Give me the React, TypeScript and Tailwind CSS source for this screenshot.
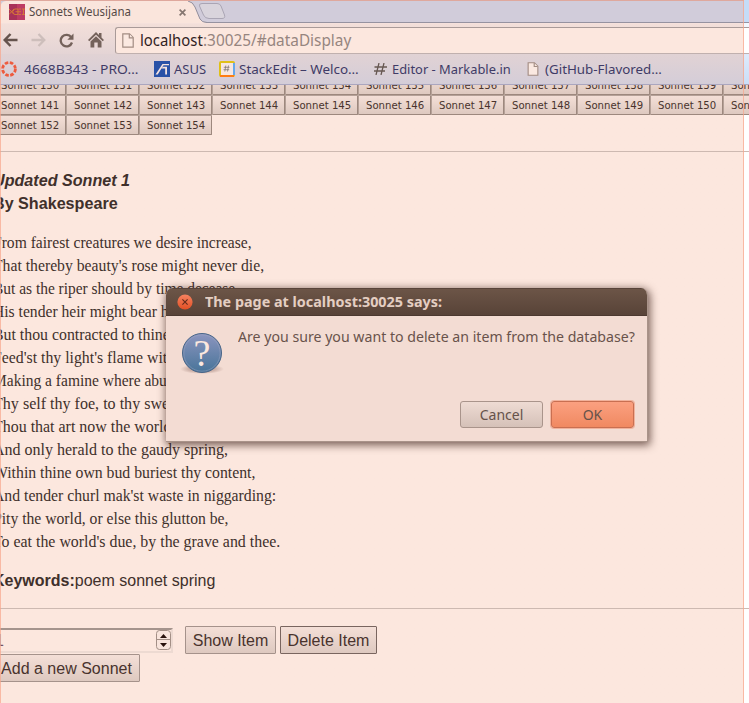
import React from "react";

const ubuntu = "font-['Noto_Sans','Open_Sans',sans-serif]";
const arial = "font-['Liberation_Sans',Arial,sans-serif]";

/* Each verse with its set width in pixels. */
const lines: [string, number][] = [
  ["From fairest creatures we desire increase,", 259],
  ["That thereby beauty's rose might never die,", 271],
  ["But as the riper should by time decease,", 246],
  ["His tender heir might bear his memory:", 246],
  ["But thou contracted to thine own bright eyes,", 286],
  ["Feed'st thy light's flame with self-substantial fuel,", 314],
  ["Making a famine where abundance lies,", 247],
  ["Thy self thy foe, to thy sweet self too cruel:", 280],
  ["Thou that art now the world's fresh ornament,", 292],
  ["And only herald to the gaudy spring,", 235],
  ["Within thine own bud buriest thy content,", 262],
  ["And tender churl mak'st waste in niggarding:", 283],
  ["Pity the world, or else this glutton be,", 235],
  ["To eat the world's due, by the grave and thee.", 287],
];

const rows = [
  Array.from({ length: 11 }, (_, i) => 130 + i),
  Array.from({ length: 11 }, (_, i) => 141 + i),
  [152, 153, 154],
];

/* A single line of text squeezed or stretched to a known width. */
function Fit({ w, className = "", children }: { w: number; className?: string; children: React.ReactNode }) {
  const ref = React.useRef<HTMLSpanElement>(null);
  const [s, setS] = React.useState(1);
  React.useLayoutEffect(() => {
    if (ref.current) setS(w / ref.current.offsetWidth);
  }, [w]);
  return (
    <span className={`block shrink-0 whitespace-nowrap ${className}`} style={{ width: w }}>
      <span ref={ref} className="inline-block origin-left" style={{ transform: `scaleX(${s})` }}>
        {children}
      </span>
    </span>
  );
}

function PageIcon({ className }: { className: string }) {
  return (
    <svg viewBox="0 0 12 15" className={className} fill="#fbe9e1" stroke="#a28c83" strokeWidth="1.2">
      <path d="M.8.8H7.5L11.2 4.5V14.2H.8Z" />
      <path d="M7.3 1V4.8H11" />
    </svg>
  );
}

function Chrome() {
  return (
    <header className={`relative h-[85px] shrink-0 overflow-hidden ${ubuntu}`}>
      <div className="relative h-[24px] border-t border-[#dfa89d] bg-[#d1ccda]">
        <svg className="absolute left-0 top-0 h-[23px] w-[749px]" viewBox="0 1 749 23" fill="none">
          <path d="M0 22.5H749" stroke="#9692a0" />
          <path d="M0 24V8Q1 1 6 1H188Q193 2 195 7L200 19Q202 22.5 207 22.5V24Z" fill="#fae5dc" />
          <path d="M188 1Q193 2 195 7L200 19Q202 22.5 207 22.5" stroke="#928e9c" />
          <path d="M202 3.5H217Q220 3.5 221 6L224.5 15Q225.5 18.5 222 18.5H209Q205 18.5 203.5 15L199.5 6Q198.8 3.5 202 3.5Z" fill="#d9d4dc" stroke="#aaa5b4" />
          <path d="M0 23.5H749" stroke="#f5e1dc" />
        </svg>
        <div className="relative flex h-[22px] items-center">
          <svg className="ml-[9px] h-4 w-4" viewBox="0 0 16 16" fill="none">
            <rect width="16" height="16" fill="#a83258" />
            <rect x="8" width="8" height="16" fill="#bd3c64" />
            <path d="M0 5L5 10.5M5 5L0 10.5M3.5 7.8L5.5 5H9V10.5H5.5L3.5 7.8M6.5 7.7H12M9.5 5H12M9.5 10.5H12M13 5H16M14.5 5V10.5M13 10.5H16" stroke="#d77a36" strokeWidth=".9" />
          </svg>
          <Fit w={102} className="ml-1 text-[12.5px] leading-5 text-[#554946]">Sonnets Weusijana</Fit>
          <svg className="ml-[48px] h-[7px] w-[7px]" viewBox="0 0 7 7" stroke="#857771" strokeWidth="1.7">
            <path d="M.6.6L6.4 6.4M6.4.6L.6 6.4" />
          </svg>
        </div>
      </div>
      <div className="flex h-[30px] items-center bg-linear-to-b from-[#f3dfd9] to-[#e4d4d5]">
        <svg className="ml-[3px] mt-[2px] h-[14px] w-[15px]" viewBox="0 0 15 14" fill="none" stroke="#65534d" strokeWidth="2.5">
          <path d="M14.5 7H2M7.5 1L1.7 7L7.5 13" />
        </svg>
        <svg className="ml-[13px] mt-[2px] h-[14px] w-[15px]" viewBox="0 0 15 14" fill="none" stroke="#cdbebb" strokeWidth="2.3">
          <path d="M.5 7H13M7.5 1L13.3 7L7.5 13" />
        </svg>
        <svg className="ml-[13px] mt-[2px] h-[15px] w-[15px]" viewBox="0 0 15 15" fill="none">
          <path d="M12.3 4.3A5.8 5.8 0 1 0 13 9.5" stroke="#74625b" strokeWidth="2.3" />
          <path d="M14.5 .5V6.7H8.3Z" fill="#74625b" />
        </svg>
        <svg className="ml-[14px] mt-[2px] h-[16px] w-[16px]" viewBox="0 0 16 16" fill="#74625b">
          <path d="M8 0L11 3V1H13.5V5.5L16 8L14.7 9.2L8 2.8L1.3 9.2L0 8Z" />
          <path d="M8 4.3L13.5 9.5V15.5H9.7V10.5H6.3V15.5H2.5V9.5Z" />
        </svg>
        <div className="ml-[11px] flex h-[27px] flex-1 items-center self-end rounded-l-[3px] border border-r-0 border-[#a99a98] border-b-[#c0b0ae] bg-[#fce7de] pl-[6px]">
          <PageIcon className="h-[15px] w-[12px]" />
          <div className="mb-[2px] ml-[6px] flex text-[16.5px] leading-6">
            <Fit w={63} className="text-[#30221f]">localhost</Fit>
            <Fit w={148} className="text-[#96857f]">:30025/#dataDisplay</Fit>
          </div>
        </div>
      </div>
      <div className="flex h-[31px] items-center border-b border-[#aaa6bf] bg-linear-to-b from-[#e1d2d4] to-[#d4cdd8] text-[13px] leading-5 text-[#3f3b66]">
        <svg className="ml-px h-4 w-4 shrink-0" viewBox="0 0 16 16" fill="none">
          <circle cx="8" cy="8" r="6.4" stroke="#ed5b3e" strokeWidth="2.8" strokeDasharray="3.5 1.53" />
        </svg>
        <Fit w={114} className="ml-[7px]">4668B343 - PRO…</Fit>
        <svg className="ml-[16px] h-4 w-4 shrink-0" viewBox="0 0 16 16">
          <rect width="16" height="16" fill="#2952a7" />
          <path d="M1.5 13.5L8.5 3H15V4.3H9.5L3.7 13.5ZM7.5 7.5L9 5.7H13V13.5H11.2V7.5Z" fill="#f4e3e0" />
        </svg>
        <Fit w={32} className="ml-1">ASUS</Fit>
        <svg className="ml-[13px] h-4 w-4 shrink-0" viewBox="0 0 16 16" fill="none">
          <rect x="1" y="1" width="14" height="14" rx="1" fill="#f7e7df" stroke="#e0c016" strokeWidth="2" />
          <path d="M15 2V14" stroke="#65a8ed" strokeWidth="2" />
          <path d="M1 15H15" stroke="#ff7c13" strokeWidth="2" />
          <path d="M6.8 4.5L5.8 10.5M9.5 4.5L8.5 10.5M4.8 6.3H10.5M4.5 8.7H10.2" stroke="#817874" strokeWidth=".8" />
        </svg>
        <Fit w={120} className="ml-[4px]">StackEdit – Welco…</Fit>
        <svg className="ml-[15px] h-[12px] w-[13px] shrink-0" viewBox="0 0 13 12" stroke="#685953" strokeWidth="1.3">
          <path d="M5 0L2 12M10 0L7 12M.5 4H13M0 8H11" />
        </svg>
        <Fit w={119} className="ml-[5px]">Editor - Markable.in</Fit>
        <PageIcon className="ml-[16px] h-[14px] w-[12px] shrink-0" />
        <Fit w={117} className="ml-[6px]">(GitHub-Flavored…</Fit>
      </div>
      <div className="absolute right-0 top-0 h-[22px] w-[5px] bg-[#c5dcf7]" />
      <div className="absolute right-0 top-[23px] h-[4px] w-[5px] bg-[#f2f8ff]" />
      <div className="absolute right-0 top-[28px] h-[25px] w-[5px] bg-white" />
      <div className="absolute right-0 top-[54px] h-[30px] w-[5px] bg-linear-to-b from-[#dfebfb] to-[#cadef7]" />
    </header>
  );
}

const formButton =
  "flex h-[28px] items-center justify-center rounded-[1px] border bg-linear-to-b from-[#f4dfd7] to-[#dec9c0] text-[16px] text-[#49332d]";

function Dialog() {
  return (
    <div className={`absolute left-[166px] top-[288px] flex h-[154px] w-[482px] flex-col overflow-hidden rounded-t-[7px] border-b border-r border-[#a99389] bg-[#f3dcd3] shadow-[1px_2px_8px_1px_rgba(60,32,24,0.7)] ${ubuntu}`}>
      <div className="flex h-[28px] shrink-0 items-center border-y border-b-[#4c3930] border-t-[#58443a] bg-linear-to-b from-[#6c5547] to-[#584338]">
        <svg className="ml-[10.5px] h-4 w-4" viewBox="0 0 16 16">
          <defs>
            <linearGradient id="close" x2="0" y2="1">
              <stop stopColor="#f58361" />
              <stop offset="1" stopColor="#e34f24" />
            </linearGradient>
          </defs>
          <circle cx="8" cy="8" r="7.6" fill="url(#close)" />
          <path d="M5.4 5.4L10.6 10.6M10.6 5.4L5.4 10.6" stroke="#642a1a" strokeWidth="1.1" />
        </svg>
        <Fit w={237} className="ml-[12.5px] text-[14px] font-bold leading-5 text-[#e4cec2]">The page at localhost:30025 says:</Fit>
      </div>
      <div className="flex">
        <svg className="ml-[14px] mt-[15px] h-[45px] w-[44px]" viewBox="0 0 44 45">
          <defs>
            <linearGradient id="help" x2="0" y2="1">
              <stop stopColor="#8c95bf" />
              <stop offset="1" stopColor="#487499" />
            </linearGradient>
            <radialGradient id="ground">
              <stop offset=".6" stopColor="#cdb1a8" />
              <stop offset="1" stopColor="#cdb1a8" stopOpacity="0" />
            </radialGradient>
          </defs>
          <ellipse cx="22" cy="38" rx="22" ry="5" fill="url(#ground)" />
          <circle cx="22" cy="22" r="19.5" fill="url(#help)" stroke="#486588" />
          <circle cx="22" cy="22" r="18.2" fill="none" stroke="#a4a9c3" strokeOpacity=".4" />
          <text x="22" y="35" textAnchor="middle" className="fill-[#fce8df] font-['Liberation_Serif',serif] text-[38px]">?</text>
        </svg>
        <Fit w={397} className="ml-[14px] mt-[11px] text-[14px] leading-5 text-[#69534b]">Are you sure you want to delete an item from the database?</Fit>
      </div>
      <div className="mb-[13px] mr-[13px] mt-auto flex justify-end gap-[8px] text-[14px] leading-5 text-[#66524a]">
        <button className="flex h-[27px] w-[83px] items-center justify-center rounded-[3px] border border-[#a9948b] bg-linear-to-b from-[#eedbd3] to-[#d5c1b8]">
          <Fit w={44}>Cancel</Fit>
        </button>
        <button className="flex h-[27px] w-[83px] items-center justify-center rounded-[3px] border border-[#c96f51] bg-linear-to-b from-[#fba080] to-[#f08961] shadow-[0_0_0_1px_rgba(240,150,120,0.6)]">
          <Fit w={20}>OK</Fit>
        </button>
      </div>
    </div>
  );
}

export default function App() {
  return (
    <div className="relative flex h-[703px] w-[749px] flex-col overflow-hidden bg-linear-to-r from-[#fce7de] from-[744px] to-white to-[744px]">
      <Chrome />
      <main className={`min-h-0 flex-1 overflow-hidden text-[16px] leading-[23px] text-[#40302b] ${arial}`}>
        <div className="-mt-[10px]">
          {rows.map((row) => (
            <div key={row[0]} className="-ml-[7px] flex w-[820px]">
              {row.map((n) => (
                <button key={n} className="flex h-[20px] w-[73px] shrink-0 items-center justify-center rounded-[1px] border border-b-[#9d887e] border-l-[#b5a198] border-r-[#9d887e] border-t-[#b5a198] bg-linear-to-b from-[#f4dfd7] to-[#dec9c0] pt-px font-['DejaVu_Sans',sans-serif] text-[11px] leading-4 text-[#49332d]">
                  <Fit w={58}>Sonnet {n}</Fit>
                </button>
              ))}
            </div>
          ))}
        </div>
        <hr className="mb-[17px] mt-[16px] border-t border-[#cdb9b1]" />
        <section className="-ml-[7px] whitespace-nowrap">
          <h2 className="font-bold italic">
            <Fit w={137}>Updated Sonnet 1</Fit>
          </h2>
          <h3 className="font-bold">
            <Fit w={125}>By Shakespeare</Fit>
          </h3>
          <div className="my-4 font-['Liberation_Serif','Times_New_Roman',serif]">
            {lines.map(([text, width]) => (
              <p key={text}>
                <Fit w={width}>{text}</Fit>
              </p>
            ))}
          </div>
          <p><b>Keywords:</b>poem sonnet spring</p>
        </section>
        <hr className="mb-[17px] mt-[16px] border-t border-[#cdb9b1]" />
        <div className="flex">
          <div className="-ml-[7px] mt-[2px] flex h-[25px] w-[180px] items-start justify-end border-2 border-b-[#eddad2] border-l-[#a5948d] border-r-[#eddad2] border-t-[#a5948d]">
            <span className="mr-auto text-[#74545d] leading-[21px]">1</span>
            <svg className="h-[20px] w-[15px]" viewBox="0 0 15 20" fill="none">
              <rect x=".5" y=".5" width="14" height="19" rx="3" fill="#f8e4dc" stroke="#a38f86" />
              <path d="M.5 9.5H14.5" stroke="#a38f86" />
              <path d="M7.5 4L11 8H4ZM4 13H11L7.5 17Z" fill="#28110c" />
            </svg>
          </div>
          <button className={`${formButton} ml-[12px] w-[91px] border-[#a5928b]`}>Show Item</button>
          <button className={`${formButton} ml-[4px] w-[97px] border-[#79655f]`}>Delete Item</button>
        </div>
        <button className={`${formButton} -ml-[7px] w-[147px] border-[#a5928b]`}>Add a new Sonnet</button>
      </main>
      <div className="pointer-events-none absolute left-0 top-0 h-[703px] w-[744px] border-x border-[#f8a58b]/70" />
      <Dialog />
    </div>
  );
}
